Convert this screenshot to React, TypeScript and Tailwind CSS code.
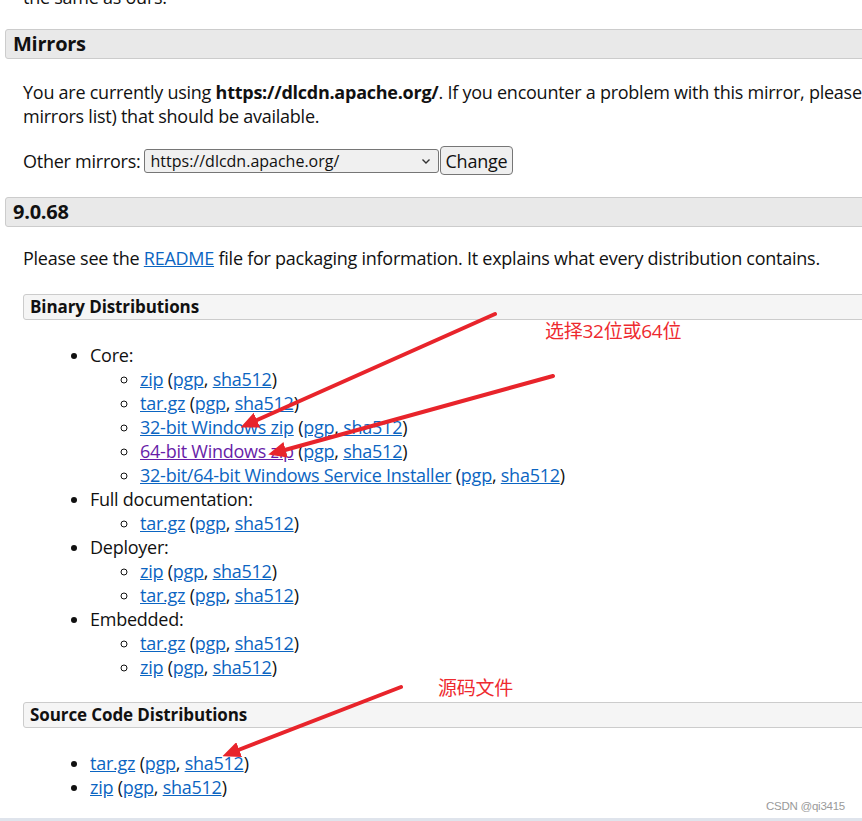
import React from "react";

const font = { fontFamily: '"Open Sans", "Noto Sans", "Noto Sans CJK SC", sans-serif' };

function L({ children, visited }: { children: React.ReactNode; visited?: boolean }) {
  return (
    <a href="#" className={visited ? "underline text-[#681da8]" : "underline text-[#0b65c2]"}>
      {children}
    </a>
  );
}

function Sigs() {
  return (
    <>
      {" "}(<L>pgp</L>, <L>sha512</L>)
    </>
  );
}

function Sub({ items }: { items: { name: string; visited?: boolean }[] }) {
  return (
    <ul className="list-[circle] pl-[50px]">
      {items.map((it, i) => (
        <li key={i}>
          <L visited={it.visited}>{it.name}</L>
          <Sigs />
        </li>
      ))}
    </ul>
  );
}

function H2({ children }: { children: React.ReactNode }) {
  return (
    <h2 className="ml-[5px] h-[30px] border border-[#cccccc] rounded-[3px] bg-[#e9e9e9] pl-[7px] text-[20px] font-bold leading-[28px] tracking-[-0.25px] text-[#111]">
      {children}
    </h2>
  );
}

function H3({ children }: { children: React.ReactNode }) {
  return (
    <h3 className="ml-[23px] h-[26px] border border-[#cccccc] rounded-[3px] bg-[#f5f5f5] pl-[6px] text-[17px] font-bold leading-[24px] tracking-[-0.1px] text-[#111]">
      {children}
    </h3>
  );
}

export default function App() {
  return (
    <div className="relative w-[862px] h-[821px] overflow-hidden bg-white text-[18px] leading-[24px] tracking-[-0.25px] text-[#111]" style={font}>
      <div className="w-[1100px]">
        <p className="mt-[-15px] ml-[23px]">the same as ours.</p>
        <div className="mt-[20px]">
          <H2>Mirrors</H2>
        </div>
        <div className="ml-[23px] mt-[21px]">
          <p className="whitespace-nowrap">
            You are currently using <b>https://dlcdn.apache.org/</b>. If you encounter a problem with this mirror, please select another mirror. If all mirrors are failing, there are backup mirrors (at the end of the
          </p>
          <p>mirrors list) that should be available.</p>
          <div className="mt-[18px] flex items-center">
            <span>Other mirrors:</span>
            <div className="ml-[3px] flex h-[24px] w-[295px] items-center justify-between rounded-[3px] border border-[#767676] bg-[#f0f0f0] pl-[6px] pr-[6px] text-[16px] tracking-normal">
              <span>https://dlcdn.apache.org/</span>
              <svg width="12" height="12" viewBox="0 0 12 12" fill="none" stroke="#333" strokeWidth="1.4">
                <path d="M2.5 4.5 L6 8 L9.5 4.5" />
              </svg>
            </div>
            <button className="ml-[1px] h-[29px] rounded-[4px] border border-[#767676] bg-[#efefef] px-[5px] text-[18px]">
              Change
            </button>
          </div>
        </div>
        <div className="mt-[22px]">
          <H2>9.0.68</H2>
        </div>
        <p className="ml-[23px] mt-[19px]">
          Please see the <L>README</L> file for packaging information. It explains what every distribution contains.
        </p>
        <div className="mt-[24px]">
          <H3>Binary Distributions</H3>
        </div>
        <ul className="mt-[23px] list-disc pl-[90px]">
          <li>
            Core:
            <Sub
              items={[
                { name: "zip" },
                { name: "tar.gz" },
                { name: "32-bit Windows zip" },
                { name: "64-bit Windows zip", visited: true },
                { name: "32-bit/64-bit Windows Service Installer" },
              ]}
            />
          </li>
          <li>
            Full documentation:
            <Sub items={[{ name: "tar.gz" }]} />
          </li>
          <li>
            Deployer:
            <Sub items={[{ name: "zip" }, { name: "tar.gz" }]} />
          </li>
          <li>
            Embedded:
            <Sub items={[{ name: "tar.gz" }, { name: "zip" }]} />
          </li>
        </ul>
        <div className="mt-[23px]">
          <H3>Source Code Distributions</H3>
        </div>
        <ul className="mt-[23px] list-disc pl-[90px]">
          <li>
            <L>tar.gz</L>
            <Sigs />
          </li>
          <li>
            <L>zip</L>
            <Sigs />
          </li>
        </ul>
      </div>

      <div className="absolute bottom-0 left-0 h-[3px] w-full bg-[#dfe4ec]" />

      <svg className="pointer-events-none absolute left-0 top-0" width="862" height="821">
        <defs>
          <marker id="ah" markerWidth="4.5" markerHeight="4" refX="3" refY="2" orient="auto" markerUnits="strokeWidth">
            <path d="M0 0 L4.5 2 L0 4 Z" fill="#e8242b" />
          </marker>
        </defs>
        <g stroke="#e8242b" strokeWidth="4" strokeLinecap="round" fill="none">
          <line x1="495" y1="314" x2="246" y2="425" markerEnd="url(#ah)" />
          <line x1="553" y1="376" x2="274" y2="453" markerEnd="url(#ah)" />
          <line x1="401" y1="687" x2="228" y2="754" markerEnd="url(#ah)" />
        </g>
      </svg>

      <div className="absolute left-[545px] top-[318px] text-[19px] leading-[26px] text-[#ee2a2f]" style={font}>选择32位或64位</div>
      <div className="absolute left-[438px] top-[675px] text-[19px] leading-[26px] text-[#ee2a2f]" style={font}>源码文件</div>
      <div
        className="absolute left-[766px] top-[799px] text-[11.5px] leading-[14px] text-[#9a9a9a]"
        style={{ fontFamily: '"Liberation Sans", Arial, sans-serif' }}
      >
        CSDN @qi3415
      </div>
    </div>
  );
}
